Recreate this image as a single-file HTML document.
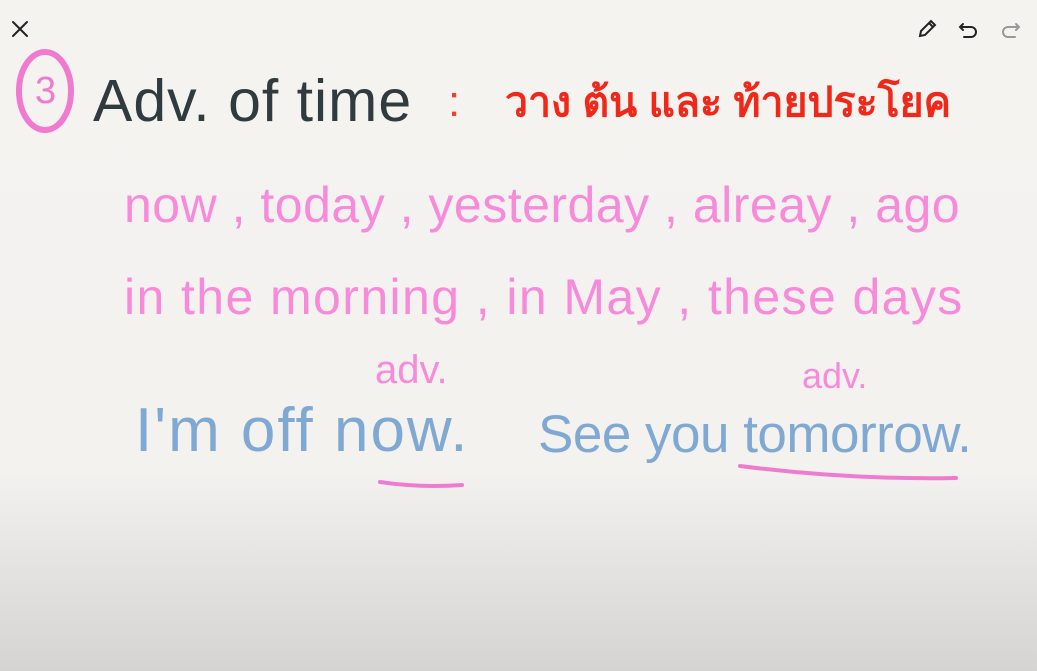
<!DOCTYPE html>
<html><head><meta charset="utf-8"><style>
html,body{margin:0;padding:0}
body{width:1037px;height:671px;overflow:hidden;position:relative;
background:linear-gradient(to bottom,#f5f3f0 0px,#f4f2ef 470px,#e6e4e2 560px,#d6d4d2 671px);
font-family:"Liberation Sans","DejaVu Sans",sans-serif}
.t{position:absolute;white-space:nowrap;line-height:1}
.pink{color:#f78ad9}
.blue{color:#7fa9d3}
</style></head><body>
<svg style="position:absolute;left:0;top:0" width="1037" height="671">
<g stroke="#222" stroke-width="2" stroke-linecap="round" fill="none">
<path d="M13 22 L27 36 M27 22 L13 36"/>
<path d="M920 36 L921 31 L931 21 L935 25 L925 35 Z M929 23 L933 27"/>
<path d="M963 24 L960 27 L963 30 M960 27 H971 a5 5 0 0 1 0 10 H964"/>
</g>
<g stroke="#999" stroke-width="2" stroke-linecap="round" fill="none">
<path d="M1016 24 L1019 27 L1016 30 M1019 27 H1008 a5 5 0 0 0 0 10 H1015"/>
</g>
<ellipse cx="45" cy="91" rx="26" ry="39" stroke="#f07ad0" stroke-width="6" fill="none"/>
<path d="M380 482 Q420 488 462 485" stroke="#f07ad0" stroke-width="4" fill="none" stroke-linecap="round"/>
<path d="M740 466 Q850 480 956 478" stroke="#f07ad0" stroke-width="4" fill="none" stroke-linecap="round"/>
</svg>
<div class="t" style="left:35px;top:72px;font-size:38px;color:#f07ad0">3</div>
<div class="t" style="left:93px;top:72px;font-size:59px;color:#2f3b3e;letter-spacing:1px">Adv. of time</div>
<div class="t" style="left:448px;top:80px;font-size:44px;color:#f0402a">:</div>
<div class="t" style="left:505px;top:82px;font-size:41px;color:#f0281a;font-weight:bold">วาง ต้น และ ท้ายประโยค</div>
<div class="t pink" style="left:124px;top:180px;font-size:50px;letter-spacing:0.5px">now , today , yesterday , alreay , ago</div>
<div class="t pink" style="left:124px;top:272px;font-size:50px;letter-spacing:1.4px">in the morning , in May , these days</div>
<div class="t pink" style="left:375px;top:350px;font-size:40px">adv.</div>
<div class="t pink" style="left:802px;top:358px;font-size:36px">adv.</div>
<div class="t blue" style="left:135px;top:400px;font-size:62px;letter-spacing:2px">I'm off now.</div>
<div class="t blue" style="left:538px;top:408px;font-size:53px;letter-spacing:-0.5px">See you tomorrow.</div>
</body></html>
